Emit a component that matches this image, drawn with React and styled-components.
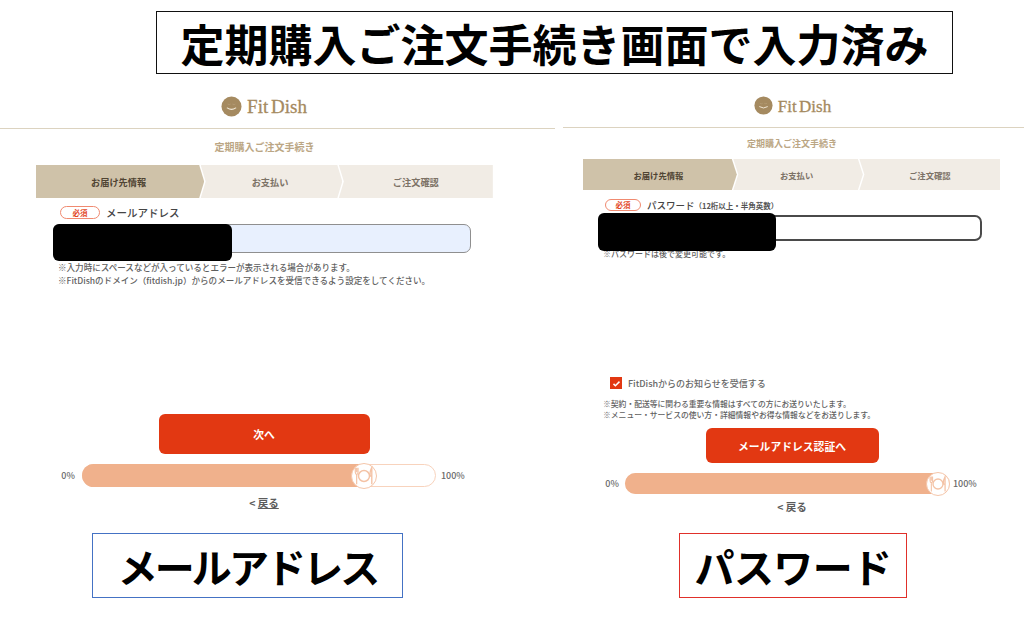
// App.jsx

import React from 'react';
import styled, { createGlobalStyle } from 'styled-components';

const GlobalStyle = createGlobalStyle`
    html, body {
        margin: 0;
        padding: 0;
        background: #fff;
    }
    body {
        font-family: "Noto Sans CJK JP", "Noto Sans", sans-serif;
        color: #5b5b5b;
    }
`;

const Page = styled.div`
    width: 1024px;
    height: 620px;
    padding-top: 11px;
    box-sizing: border-box;
    overflow: hidden;
    background: #fff;
`;

const TitleBox = styled.h1`
    width: 797px;
    height: 63px;
    margin: 0 0 0 156px;
    box-sizing: border-box;
    border: 1px solid #111;
    display: flex;
    align-items: center;
    justify-content: center;
    font-size: 44px;
    font-weight: 700;
    line-height: 1;
    color: #000;
    letter-spacing: 0;
`;

const Panels = styled.div`
    display: grid;
    grid-template-columns: 555px 461px;
    column-gap: 8px;
    margin-top: 22px;
`;

const Panel = styled.section`
    height: 502px;
    display: flex;
    flex-direction: column;
`;

const Header = styled.header`
    height: ${(p) => p.$height}px;
    box-sizing: border-box;
    padding-right: ${(p) => p.$trim}px;
    border-bottom: 1.5px solid #dcd3c0;
    display: flex;
    justify-content: center;
    gap: 5px;
`;

const LogoText = styled.span`
    font-family: "Liberation Serif", serif;
    font-size: ${(p) => p.$size}px;
    line-height: 22px;
    color: #a58a60;
    word-spacing: -2px;
    -webkit-text-stroke: 0.3px #a58a60;
`;

const Body = styled.div`
    width: ${(p) => p.$width}px;
    margin-left: ${(p) => p.$left}px;
`;

const Heading = styled.h2`
    margin: 0;
    height: ${(p) => p.$height}px;
    padding-bottom: ${(p) => p.$lift || 0}px;
    box-sizing: border-box;
    display: flex;
    align-items: center;
    justify-content: center;
    font-size: ${(p) => p.$size}px;
    font-weight: 700;
    color: #bba684;
`;

const Steps = styled.div`
    display: flex;
    height: ${(p) => p.$height}px;
`;

const Step = styled.div`
    flex: 0 0 ${(p) => p.$share}%;
    margin-left: ${(p) => (p.$first ? 0 : -3.5)}px;
    padding-right: ${(p) => (p.$last ? 0 : 3)}px;
    box-sizing: border-box;
    display: flex;
    align-items: center;
    justify-content: center;
    font-size: ${(p) => p.$size}px;
    font-weight: 700;
    background: ${(p) => (p.$active ? '#cfc2a9' : '#f1ece5')};
    color: ${(p) => (p.$active ? '#4f4433' : '#7c7266')};
    clip-path: ${(p) =>
        p.$first
            ? 'polygon(0 0, calc(100% - 5px) 0, 100% 50%, calc(100% - 5px) 100%, 0 100%)'
            : p.$last
            ? 'polygon(0 0, 100% 0, 100% 100%, 0 100%, 5px 50%)'
            : 'polygon(0 0, calc(100% - 5px) 0, 100% 50%, calc(100% - 5px) 100%, 0 100%, 5px 50%)'};
`;

const FieldLabel = styled.div`
    display: flex;
    align-items: center;
    gap: 6px;
    margin: ${(p) => p.$top}px 0 0 ${(p) => p.$left}px;
    height: 13px;
    font-size: ${(p) => p.$size}px;
    font-weight: 500;
    color: #444;
    small {
        font-size: 7.5px;
        font-weight: 700;
        color: #555;
    }
`;

const Badge = styled.span`
    flex: 0 0 ${(p) => p.$width}px;
    height: ${(p) => p.$height}px;
    box-sizing: border-box;
    border: 1px solid #f08a70;
    border-radius: 8px;
    display: flex;
    align-items: center;
    justify-content: center;
    font-size: 7.5px;
    font-weight: 700;
    color: #e2471f;
`;

const InputBox = styled.div`
    position: relative;
    width: ${(p) => p.$width}px;
    height: ${(p) => p.$height}px;
    margin: ${(p) => p.$top}px 0 0 ${(p) => p.$left}px;
    box-sizing: border-box;
    border-radius: 7px;
    border: ${(p) => (p.$filled ? '1px solid #8f8f8f' : '2px solid #4a4a4a')};
    background: ${(p) => (p.$filled ? '#e8f0fe' : '#fff')};
`;

const Redaction = styled.div`
    position: absolute;
    left: ${(p) => p.$x}px;
    top: ${(p) => p.$y}px;
    width: ${(p) => p.$width}px;
    height: ${(p) => p.$height}px;
    border-radius: 6px;
    background: #000;
`;

const Notes = styled.div`
    margin: ${(p) => p.$top}px 0 0 ${(p) => p.$left}px;
    font-size: ${(p) => p.$size}px;
    font-weight: 500;
    line-height: ${(p) => p.$line}px;
    color: #5f5f5f;
    white-space: nowrap;
`;

const CheckRow = styled.label`
    display: flex;
    align-items: center;
    gap: 6px;
    margin: 117px 0 0 27px;
    height: 12px;
    font-size: 9px;
    font-weight: 500;
    color: #666;
`;

const CheckBox = styled.span`
    flex: 0 0 12px;
    height: 12px;
    background: #e23812;
    display: flex;
    align-items: center;
    justify-content: center;
`;

const SubmitButton = styled.button`
    display: block;
    width: ${(p) => p.$width}px;
    height: ${(p) => p.$height}px;
    margin: ${(p) => p.$top}px auto 0;
    border: 0;
    border-radius: 6px;
    background: #e23812;
    color: #fff;
    font-family: inherit;
    font-size: 10.8px;
    font-weight: 700;
`;

const ProgressRow = styled.div`
    display: flex;
    align-items: center;
    justify-content: center;
    margin-top: ${(p) => p.$top}px;
    padding-right: 2px;
    font-size: 9px;
    font-weight: 500;
    color: #6a6a6a;
`;

const Percent = styled.span`
    margin: 0 ${(p) => p.$right || 0}px 0 ${(p) => p.$left || 0}px;
`;

const Track = styled.div`
    position: relative;
    width: ${(p) => p.$width}px;
    height: ${(p) => p.$height}px;
    box-sizing: border-box;
    border: 1px solid #f8d3bd;
    border-radius: 12px;
    background: #fff;
`;

const Fill = styled.div`
    height: 100%;
    border-radius: 12px 0 0 12px;
    background: #f0b18c;
    margin: -1px 0 0 -1px;
    padding-bottom: 2px;
`;

const Thumb = styled.div`
    position: absolute;
    top: 50%;
    transform: translate(-50%, -50%);
    width: ${(p) => p.$size}px;
    height: ${(p) => p.$size}px;
    box-sizing: border-box;
    border: 1.5px solid #f5c6aa;
    border-radius: 50%;
    background: #fff;
    display: flex;
    align-items: center;
    justify-content: center;
`;

const BackLink = styled.a`
    display: block;
    text-align: center;
    margin-top: ${(p) => p.$top}px;
    font-size: 10.5px;
    font-weight: 700;
    line-height: 14px;
    color: #5c5c5c;
    span {
        text-decoration: ${(p) => (p.$plain ? 'none' : 'underline')};
    }
`;

const Caption = styled.div`
    width: ${(p) => p.$width}px;
    height: 65px;
    margin: auto 0 0 ${(p) => p.$left}px;
    box-sizing: border-box;
    border: 1px solid ${(p) => p.$line};
    display: flex;
    align-items: center;
    justify-content: center;
    font-size: 40px;
    font-weight: 700;
    line-height: 1;
    letter-spacing: ${(p) => p.$track}px;
    color: #000;
`;

const LogoMark = ({ size }) => (
    <svg width={size} height={size} viewBox="0 0 22 22" aria-hidden="true">
        <circle cx="11" cy="11" r="10.5" fill="#a58a60" />
        <path d="M6.5 12.5q4.5 3 9 0" fill="none" stroke="#f3ead9" strokeWidth="1.1" strokeLinecap="round" />
        <path d="M7 8.5q2 1 3 0M12 8.5q2 1 3 0" fill="none" stroke="#b9a17c" strokeWidth="0.7" />
    </svg>
);

const PlateIcon = ({ size }) => (
    <svg width={size} height={size} viewBox="0 0 24 24" fill="none" stroke="#f4c3a6" aria-hidden="true">
        <circle cx="12" cy="12" r="6" strokeWidth="1.6" />
        <path d="M2.5 3v5q0 2 1.5 2.5V21M4 3v5M5.5 3v5q0 2-1.5 2.5" strokeWidth="1.3" />
        <path d="M20.5 21V3q-2 3-2 9h2" strokeWidth="1.5" />
    </svg>
);

const Progress = ({ track, height, value, thumb, icon }) => (
    <Track $width={track} $height={height}>
        <Fill style={{ width: `${value}%` }} />
        <Thumb $size={thumb} style={{ left: `${value}%` }}>
            <PlateIcon size={icon} />
        </Thumb>
    </Track>
);

const App = () => {
    return (
        <Page>
            <GlobalStyle />
            <TitleBox>定期購入ご注文手続き画面で入力済み</TitleBox>
            <Panels>
                <Panel>
                    <Header $height={33} $trim={27}>
                        <LogoMark size={21} />
                        <LogoText $size={19}>Fit Dish</LogoText>
                    </Header>
                    <Body $width={457} $left={36}>
                        <Heading $height={36} $lift={2} $size={10}>定期購入ご注文手続き</Heading>
                        <Steps $height={33}>
                            <Step $first $active $share={36.8} $size={9.2}>お届け先情報</Step>
                            <Step $share={31} $size={9.2}>お支払い</Step>
                            <Step $last $share={33.7} $size={9.2}>ご注文確認</Step>
                        </Steps>
                        <FieldLabel $top={8} $left={24} $size={10.5}>
                            <Badge $width={40} $height={13}>必須</Badge>
                            メールアドレス
                        </FieldLabel>
                        <InputBox $filled $width={418} $height={29} $top={5} $left={17}>
                            <Redaction $x={-1} $y={-1} $width={179} $height={37} />
                        </InputBox>
                        <Notes $top={8} $left={22} $size={8.55} $line={13}>
                            ※入力時にスペースなどが入っているとエラーが表示される場合があります。
                            <br />
                            ※FitDishのドメイン（fitdish.jp）からのメールアドレスを受信できるよう設定をしてください。
                        </Notes>
                    </Body>
                    <Body $width={528} $left={0}>
                        <SubmitButton $width={211} $height={40} $top={127}>次へ</SubmitButton>
                        <ProgressRow $top={10}>
                            <Percent $right={7}>0%</Percent>
                            <Progress track={354} height={23} value={80} thumb={26} icon={22} />
                            <Percent $left={5}>100%</Percent>
                        </ProgressRow>
                        <BackLink $top={9}>&lt; <span>戻る</span></BackLink>
                    </Body>
                    <Caption $width={311} $left={92} $line="#4472c4" $track={-2.9}>メールアドレス</Caption>
                </Panel>
                <Panel>
                    <Header $height={32} $trim={2}>
                        <LogoMark size={19} />
                        <LogoText $size={17}>Fit Dish</LogoText>
                    </Header>
                    <Body $width={418} $left={20}>
                        <Heading $height={31} $size={9}>定期購入ご注文手続き</Heading>
                        <Steps $height={31}>
                            <Step $first $active $share={36.8} $size={8.3}>お届け先情報</Step>
                            <Step $share={31} $size={8.3}>お支払い</Step>
                            <Step $last $share={33.7} $size={8.3}>ご注文確認</Step>
                        </Steps>
                        <FieldLabel $top={8} $left={22} $size={9.5}>
                            <Badge $width={36} $height={12}>必須</Badge>
                            <span>パスワード<small>（12桁以上・半角英数）</small></span>
                        </FieldLabel>
                        <InputBox $width={384} $height={26} $top={4} $left={15}>
                            <Redaction $x={-2} $y={-4} $width={178} $height={38} />
                        </InputBox>
                        <Notes $top={7} $left={20} $size={8} $line={12}>
                            ※パスワードは後で変更可能です。
                        </Notes>
                        <CheckRow>
                            <CheckBox>
                                <svg width="9" height="9" viewBox="0 0 24 24" fill="none" stroke="#fff" strokeWidth="4" aria-hidden="true">
                                    <path d="M4 13l5 5L20 7" />
                                </svg>
                            </CheckBox>
                            FitDishからのお知らせを受信する
                        </CheckRow>
                        <Notes $top={9} $left={20} $size={7.8} $line={11}>
                            ※契約・配送等に関わる重要な情報はすべての方にお送りいたします。
                            <br />
                            ※メニュー・サービスの使い方・詳細情報やお得な情報などをお送りします。
                        </Notes>
                        <SubmitButton $width={173} $height={35} $top={8}>メールアドレス認証へ</SubmitButton>
                        <ProgressRow $top={10}>
                            <Percent $right={6}>0%</Percent>
                            <Progress track={325} height={21} value={96.6} thumb={24} icon={20} />
                            <Percent $left={3}>100%</Percent>
                        </ProgressRow>
                        <BackLink $top={6} $plain>&lt; <span>戻る</span></BackLink>
                    </Body>
                    <Caption $width={228} $left={116} $line="#e0302a" $track={-0.6}>パスワード</Caption>
                </Panel>
            </Panels>
        </Page>
    );
};

export default App;
